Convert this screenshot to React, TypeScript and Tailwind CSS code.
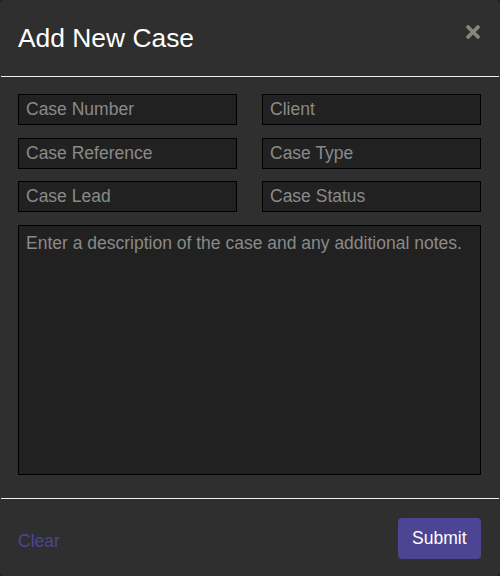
import React from "react";

const fieldClass =
  "h-[31px] w-full border border-black bg-[#212121] px-[7px] text-[17.5px] text-white outline-none placeholder:text-[#8a8a8a]";

export default function App() {
  return (
    <div
      className="h-[576px] w-[500px] bg-[#1a1a1a]"
      style={{ fontFamily: '"Liberation Sans", Arial, sans-serif' }}
    >
      <div className="flex h-full flex-col rounded-[4px] bg-[#2f2f2f]">
        <header className="flex h-[76px] items-start justify-between pl-[18px] pr-[20px]">
          <h1 className="pt-[22px] text-[26.4px] leading-[32px] text-white">Add New Case</h1>
          {/* heavy close cross */}
          <button className="mt-[25px]" aria-label="Close">
            <svg width="14" height="14" viewBox="0 0 14 14">
              <path
                d="M2.2 2.2 L11.8 11.8 M11.8 2.2 L2.2 11.8"
                stroke="#8b857f"
                strokeWidth="3.6"
                strokeLinecap="square"
              />
            </svg>
          </button>
        </header>
        <hr className="mx-px border-0 border-t border-[#eeeeee]" />

        <div className="flex flex-1 flex-col pl-[18px] pr-[19px] pt-[17px]">
          <div className="grid grid-cols-2 gap-x-[25px] gap-y-[12.5px]">
            <input className={fieldClass} placeholder="Case Number" />
            <input className={fieldClass} placeholder="Client" />
            <input className={fieldClass} placeholder="Case Reference" />
            <input className={fieldClass} placeholder="Case Type" />
            <input className={fieldClass} placeholder="Case Lead" />
            <input className={fieldClass} placeholder="Case Status" />
          </div>
          <textarea
            className="mt-[13px] h-[250px] w-full resize-none border border-black bg-[#212121] px-[7px] py-[6px] text-[17.5px] leading-[22px] text-white outline-none placeholder:text-[#8a8a8a]"
            placeholder="Enter a description of the case and any additional notes."
          />
        </div>

        <hr className="mx-px border-0 border-t border-[#eeeeee]" />
        <footer className="flex h-[77px] items-center justify-between pl-[18px] pr-[19px] pt-[2px]">
          <button className="mt-[6px] text-[17.5px] text-[#4c4596]">Clear</button>
          <button className="h-[41px] rounded-[4px] bg-[#4b4594] px-[14.5px] text-[17.5px] text-white">
            Submit
          </button>
        </footer>
      </div>
    </div>
  );
}
